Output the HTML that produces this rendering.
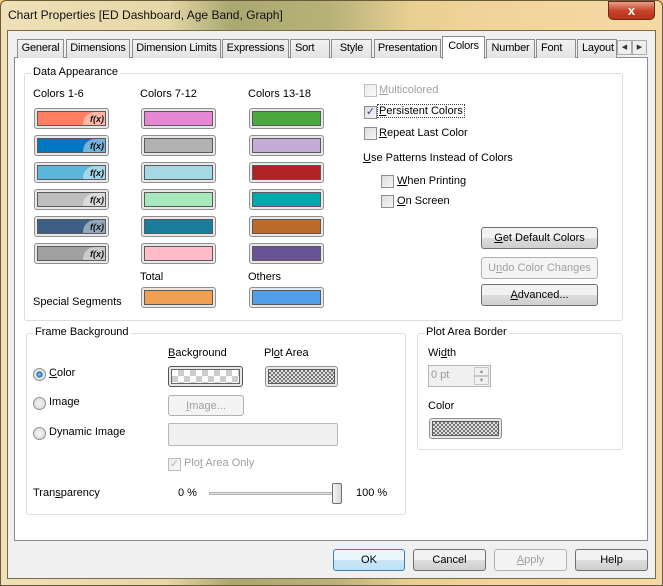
<!DOCTYPE html>
<html><head><meta charset="utf-8"><style>
*{box-sizing:border-box;margin:0;padding:0}
body{width:663px;height:586px;overflow:hidden;font-family:"Liberation Sans",sans-serif;font-size:11px;color:#000;position:relative;background:#f4c978}
.a{position:absolute}
.frame{left:0;top:0;width:663px;height:586px;background:linear-gradient(90deg,#efe0b8 0%,#e6d7a8 25%,#a8a870 35%,#b8b27a 50%,#e8cf92 62%,#f2d49a 75%,#f5d9a4 100%);border:1px solid #6a5a3a;border-radius:6px 6px 0 0}
.client{left:7px;top:30px;width:649px;height:549px;background:#f0f0f0;border:1px solid #7a6a4a}
.panel{left:14px;top:57px;width:634px;height:484px;background:#fff;border:1px solid #898c95}
.tab{top:39px;height:19px;border:1px solid #898c95;border-bottom:none;background:linear-gradient(#f2f2f2,#e3e3e3);text-align:center;line-height:17px;font-size:11px;white-space:nowrap;overflow:hidden;letter-spacing:-0.2px}
.tab.sel{top:36px;height:23px;background:#fff;z-index:3;line-height:19px}
.grp{border:1px solid #d5dfe5;border-radius:3px}
.gl{background:#fff;padding:0 2px}
.sw{width:75px;height:21px;border:1px solid #8f8f8f;border-radius:3px;background:#e8e8e8;padding:2px}
.sw div{width:100%;height:100%;border:1px solid #5a5a5a;position:relative;overflow:hidden}
.fx{position:absolute;right:0;top:0;height:100%;width:22px;background:rgba(255,255,255,.45);border-radius:12px 0 0 0;font-size:9px;font-style:italic;font-weight:bold;text-align:right;line-height:14px;padding-right:1px;color:#111}
.cb{width:13px;height:13px;border:1px solid #8e8f8f;background:linear-gradient(135deg,#dcdcdc,#f6f6f6)}
.btn{height:22px;border:1px solid #707070;border-radius:3px;background:linear-gradient(#f2f2f2 50%,#dddddd 50%,#cfcfcf);text-align:center;line-height:20px}
.btn.dis{border-color:#adb2b5;background:#f4f4f4;color:#a0a0a0}
.rad{width:13px;height:13px;border-radius:50%;border:1px solid #8e8f8f;background:radial-gradient(#f4f4f4,#d6d6d6)}
.chk{background:repeating-conic-gradient(#777 0 25%,#ddd 0 50%) 0 0/4px 4px}
.chk2{background:repeating-conic-gradient(#ccc 0 25%,#fff 0 50%) 0 0/12px 12px}
u{text-decoration:underline}
</style></head><body>
<div class="a frame"></div>
<div class="a" style="left:8px;top:8px;font-size:12px;color:#111">Chart Properties [ED Dashboard, Age Band, Graph]</div>
<div class="a" style="left:608px;top:1px;width:47px;height:19px;border:1px solid #6b2a1a;border-radius:0 0 5px 5px;background:linear-gradient(#e8a08a,#c8442a 50%,#b83018);color:#fff;font-weight:bold;text-align:center;line-height:17px;font-size:13px">x</div>
<div class="a client"></div>
<div class="a panel"></div>
<div class="a tab" style="left:17px;width:47px">General</div>
<div class="a tab" style="left:66px;width:64px">Dimensions</div>
<div class="a tab" style="left:132px;width:89px">Dimension Limits</div>
<div class="a tab" style="left:222px;width:67px">Expressions</div>
<div class="a tab" style="left:290px;width:40px;text-align:left;padding-left:4px">Sort</div>
<div class="a tab" style="left:331px;width:41px">Style</div>
<div class="a tab" style="left:374px;width:67px">Presentation</div>
<div class="a tab sel" style="left:442px;width:43px">Colors</div>
<div class="a tab" style="left:486px;width:49px">Number</div>
<div class="a tab" style="left:536px;width:40px;text-align:left;padding-left:4px">Font</div>
<div class="a tab" style="left:577px;width:40px;text-align:left;padding-left:4px">Layout</div>
<div class="a" style="left:617px;top:40px;width:15px;height:15px;border:1px solid #aaa;background:#eee;font-size:7px;text-align:center;line-height:13px;color:#333">◀</div>
<div class="a" style="left:632px;top:40px;width:15px;height:15px;border:1px solid #aaa;background:#eee;font-size:7px;text-align:center;line-height:13px;color:#333">▶</div>

<div class="a grp" style="left:24px;top:73px;width:599px;height:248px"></div>
<div class="a gl" style="left:31px;top:66px">Data Appearance</div>
<div class="a" style="left:33px;top:88px">Colors 1-6</div>
<div class="a" style="left:140px;top:88px">Colors 7-12</div>
<div class="a" style="left:248px;top:88px">Colors 13-18</div>

<div class="a sw" style="left:34px;top:108px"><div style="background:#ff7f62"><span class="fx">f(x)</span></div></div>
<div class="a sw" style="left:34px;top:135px"><div style="background:#0077c1"><span class="fx">f(x)</span></div></div>
<div class="a sw" style="left:34px;top:162px"><div style="background:#5ab6da"><span class="fx">f(x)</span></div></div>
<div class="a sw" style="left:34px;top:189px"><div style="background:#bebebe"><span class="fx">f(x)</span></div></div>
<div class="a sw" style="left:34px;top:216px"><div style="background:#3c5f83"><span class="fx">f(x)</span></div></div>
<div class="a sw" style="left:34px;top:243px"><div style="background:#a0a0a0"><span class="fx">f(x)</span></div></div>

<div class="a sw" style="left:141px;top:108px"><div style="background:#e587d2"></div></div>
<div class="a sw" style="left:141px;top:135px"><div style="background:#b2b2b2"></div></div>
<div class="a sw" style="left:141px;top:162px"><div style="background:#a6d8e4"></div></div>
<div class="a sw" style="left:141px;top:189px"><div style="background:#a7e8bc"></div></div>
<div class="a sw" style="left:141px;top:216px"><div style="background:#1b7d9c"></div></div>
<div class="a sw" style="left:141px;top:243px"><div style="background:#ffbcc8"></div></div>

<div class="a sw" style="left:249px;top:108px"><div style="background:#4aa841"></div></div>
<div class="a sw" style="left:249px;top:135px"><div style="background:#c4acd6"></div></div>
<div class="a sw" style="left:249px;top:162px"><div style="background:#b02326"></div></div>
<div class="a sw" style="left:249px;top:189px"><div style="background:#00aaac"></div></div>
<div class="a sw" style="left:249px;top:216px"><div style="background:#bc6a2c"></div></div>
<div class="a sw" style="left:249px;top:243px"><div style="background:#6a5395"></div></div>

<div class="a" style="left:140px;top:271px">Total</div>
<div class="a" style="left:248px;top:271px">Others</div>
<div class="a" style="left:33px;top:296px">Special Segments</div>
<div class="a sw" style="left:141px;top:287px"><div style="background:#f0a050"></div></div>
<div class="a sw" style="left:249px;top:287px"><div style="background:#4f9fe9"></div></div>

<div class="a cb" style="left:364px;top:84px;opacity:.55"></div>
<div class="a" style="left:379px;top:84px;color:#a0a0a0"><u>M</u>ulticolored</div>
<div class="a cb" style="left:364px;top:106px;color:#2a4a8a;font-size:11px;line-height:11px;text-align:center">✓</div>
<div class="a" style="left:378px;top:105px;outline:1px dotted #444;padding:0 1px"><u>P</u>ersistent Colors</div>
<div class="a cb" style="left:364px;top:127px"></div>
<div class="a" style="left:379px;top:127px"><u>R</u>epeat Last Color</div>
<div class="a" style="left:363px;top:152px"><u>U</u>se Patterns Instead of Colors</div>
<div class="a cb" style="left:381px;top:175px"></div>
<div class="a" style="left:397px;top:175px"><u>W</u>hen Printing</div>
<div class="a cb" style="left:381px;top:195px"></div>
<div class="a" style="left:397px;top:195px"><u>O</u>n Screen</div>
<div class="a btn" style="left:481px;top:227px;width:117px"><u>G</u>et Default Colors</div>
<div class="a btn dis" style="left:481px;top:257px;width:117px">U<u>n</u>do Color Changes</div>
<div class="a btn" style="left:481px;top:284px;width:117px"><u>A</u>dvanced...</div>

<div class="a grp" style="left:26px;top:333px;width:380px;height:182px"></div>
<div class="a gl" style="left:33px;top:326px">Frame Background</div>
<div class="a" style="left:168px;top:347px"><u>B</u>ackground</div>
<div class="a" style="left:264px;top:347px">Pl<u>o</u>t Area</div>
<div class="a rad" style="left:33px;top:368px;background:radial-gradient(#8fd0f5 0,#1f6fb0 35%,#e8e8e8 45%,#d6d6d6)"></div>
<div class="a" style="left:49px;top:367px"><u>C</u>olor</div>
<div class="a rad" style="left:33px;top:397px"></div>
<div class="a" style="left:49px;top:396px">Image</div>
<div class="a rad" style="left:33px;top:427px"></div>
<div class="a" style="left:49px;top:426px">Dynamic Image</div>
<div class="a sw" style="left:168px;top:366px;border-color:#555"><div class="chk2" style="border-color:#666"></div></div>
<div class="a sw" style="left:265px;top:366px;width:73px"><div class="chk"></div></div>
<div class="a btn dis" style="left:168px;top:395px;width:76px;height:21px"><u>I</u>mage...</div>
<div class="a" style="left:168px;top:423px;width:170px;height:23px;border:1px solid #b8b8b8;border-radius:2px;background:#f0f0f0"></div>
<div class="a cb" style="left:168px;top:458px;opacity:.6;color:#888;font-size:11px;line-height:11px;text-align:center">✓</div>
<div class="a" style="left:184px;top:457px;color:#a0a0a0">Plo<u>t</u> Area Only</div>
<div class="a" style="left:33px;top:487px">Tran<u>s</u>parency</div>
<div class="a" style="left:178px;top:487px">0 %</div>
<div class="a" style="left:209px;top:492px;width:130px;height:3px;border:1px solid #b0b0b0;background:#e6e6e6"></div>
<div class="a" style="left:332px;top:483px;width:10px;height:21px;border:1px solid #707070;border-radius:2px;background:linear-gradient(90deg,#f4f4f4,#d8d8d8)"></div>
<div class="a" style="left:356px;top:487px">100 %</div>

<div class="a grp" style="left:417px;top:333px;width:206px;height:117px"></div>
<div class="a gl" style="left:424px;top:326px">Plot Area Border</div>
<div class="a" style="left:428px;top:347px">Wi<u>d</u>th</div>
<div class="a" style="left:428px;top:365px;width:63px;height:22px;border:1px solid #b8b8b8;background:#f0f0f0;color:#999;padding:2px 2px;line-height:14px">0 pt</div>
<div class="a" style="left:474px;top:367px;width:15px;height:9px;border:1px solid #c8c8c8;background:#f0f0f0;font-size:6px;color:#999;text-align:center;line-height:8px">▲</div>
<div class="a" style="left:474px;top:376px;width:15px;height:9px;border:1px solid #c8c8c8;background:#f0f0f0;font-size:6px;color:#999;text-align:center;line-height:8px">▼</div>
<div class="a" style="left:428px;top:400px">Color</div>
<div class="a sw" style="left:429px;top:418px;width:73px"><div class="chk"></div></div>

<div class="a btn" style="left:333px;top:549px;width:72px;border-color:#3c7fb1;background:linear-gradient(#eaf6fd 50%,#c9e6f7 50%,#bde0f5)">OK</div>
<div class="a btn" style="left:413px;top:549px;width:73px">Cancel</div>
<div class="a btn dis" style="left:494px;top:549px;width:73px"><u>A</u>pply</div>
<div class="a btn" style="left:575px;top:549px;width:73px">Help</div>
</body></html>
